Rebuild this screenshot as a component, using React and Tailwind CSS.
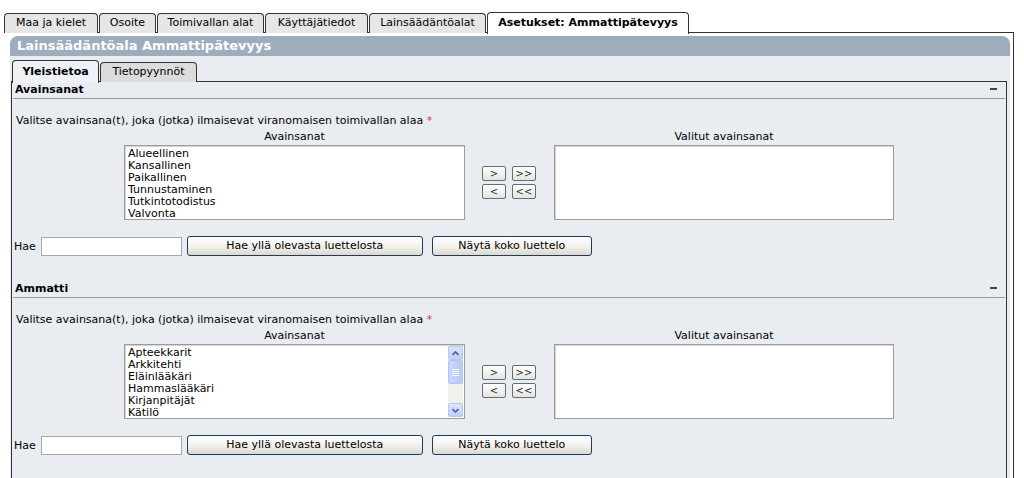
import React from "react";

const outerTabs = [
  { label: "Maa ja kielet", w: "w-[94px]" },
  { label: "Osoite", w: "w-[57px]" },
  { label: "Toimivallan alat", w: "w-[107px]" },
  { label: "Käyttäjätiedot", w: "w-[103px]" },
  { label: "Lainsäädäntöalat", w: "w-[117px]" },
];

function SmallBtn({ children }) {
  return (
    <div className="w-[24px] h-[15px] border border-[#5f6e78] rounded-[2px] bg-gradient-to-b from-[#ffffff] to-[#e4e4e0] flex items-center justify-center text-[10px] leading-none text-[#333]">
      {children}
    </div>
  );
}

function XpBtn({ children, w }) {
  return (
    <div
      className={`${w} h-[20px] border border-[#1d3b5a] rounded-[3px] bg-gradient-to-b from-[#ffffff] via-[#f3f2ee] to-[#dcd8cf] flex items-center justify-center text-[11px] text-black`}
    >
      {children}
    </div>
  );
}

function Chevron({ up }) {
  return (
    <svg width="7" height="5" viewBox="0 0 7 5">
      <path
        d={up ? "M0.5 4 L3.5 1 L6.5 4" : "M0.5 1 L3.5 4 L6.5 1"}
        fill="none"
        stroke="#4d6185"
        strokeWidth="1.6"
      />
    </svg>
  );
}

function Scrollbar() {
  return (
    <div className="w-[15px] h-full flex flex-col bg-[#f1f0ea]">
      <div className="h-[14px] border border-[#b7c9f3] rounded-[2px] bg-gradient-to-b from-[#dbe5fd] to-[#bccefa] flex items-center justify-center">
        <Chevron up />
      </div>
      <div className="h-[24px] border border-[#b2c4ef] rounded-[2px] bg-gradient-to-r from-[#c9d8fd] to-[#b9cbf8] flex flex-col items-center justify-center gap-[1px]">
        <div className="w-[7px] h-[1px] bg-[#eef3ff]" />
        <div className="w-[7px] h-[1px] bg-[#eef3ff]" />
        <div className="w-[7px] h-[1px] bg-[#eef3ff]" />
        <div className="w-[7px] h-[1px] bg-[#eef3ff]" />
      </div>
      <div className="flex-1" />
      <div className="h-[14px] border border-[#b7c9f3] rounded-[2px] bg-gradient-to-b from-[#dbe5fd] to-[#bccefa] flex items-center justify-center">
        <Chevron />
      </div>
    </div>
  );
}

function ListBox({ items, scroll, w }) {
  return (
    <div className={`${w} h-[75px] border border-[#9c9c9c] shadow-[inset_1px_1px_0_#d4d4d4] bg-white flex p-[1px]`}>
      <div className="flex-1 pl-[2px] pt-[1px] text-[11px] leading-[12px] text-black">
        {items.map((it) => (
          <div key={it}>{it}</div>
        ))}
      </div>
      {scroll && <Scrollbar />}
    </div>
  );
}

function Section({ title, items, scroll }) {
  return (
    <div>
      <div className="mx-[1px] h-[17px] flex items-center justify-between border-b border-[#9a9a9a] pl-[2px]">
        <span className="font-bold text-[11px] text-black">{title}</span>
        <span className="w-[7px] h-[2px] bg-[#444] mr-[8px] mt-[-2px]" />
      </div>
      <div className="pl-[4px] mt-[15px] leading-[14px] text-[11px] text-black">
        Valitse avainsana(t), joka (jotka) ilmaisevat viranomaisen toimivallan alaa{" "}
        <span className="text-[#d43a3a]">*</span>
      </div>
      <div className="flex ml-[112px] mt-[3px]">
        <div className="flex flex-col w-[341px]">
          <div className="text-center leading-[12px] text-[11px] text-black">Avainsanat</div>
          <div className="mt-[2px]">
            <ListBox items={items} scroll={scroll} w="w-[341px]" />
          </div>
        </div>
        <div className="ml-[17px] pt-[35px] flex flex-col gap-[3px]">
          <div className="flex gap-[6px]">
            <SmallBtn>&gt;</SmallBtn>
            <SmallBtn>&gt;&gt;</SmallBtn>
          </div>
          <div className="flex gap-[6px]">
            <SmallBtn>&lt;</SmallBtn>
            <SmallBtn>&lt;&lt;</SmallBtn>
          </div>
        </div>
        <div className="ml-[18px] flex flex-col w-[340px]">
          <div className="text-center leading-[12px] text-[11px] text-black">Valitut avainsanat</div>
          <div className="mt-[2px]">
            <ListBox items={[]} w="w-[340px]" />
          </div>
        </div>
      </div>
      <div className="flex items-center mt-[16px] pl-[2px] h-[20px]">
        <span className="text-[11px] text-black mt-[3px]">Hae</span>
        <div className="ml-[5px] w-[141px] h-[19px] border border-[#a7a7a7] bg-white mt-[1px]" />
        <div className="ml-[5px]">
          <XpBtn w="w-[236px]">Hae yllä olevasta luettelosta</XpBtn>
        </div>
        <div className="ml-[9px]">
          <XpBtn w="w-[160px]">Näytä koko luettelo</XpBtn>
        </div>
      </div>
    </div>
  );
}

export default function App() {
  return (
    <div className="w-[1024px] h-[478px] overflow-hidden bg-white font-['DejaVu_Sans',Verdana,sans-serif] text-[11px] text-black">
      <div className="pt-[11px] w-[1014px]">
        <div className="flex items-end gap-[1px] pl-[4px] h-[22px] relative z-10">
          {outerTabs.map((t) => (
            <div
              key={t.label}
              className={`${t.w} h-[20px] border border-b-0 border-[#333] rounded-t-[4px] bg-[#e6e6e6] flex items-center justify-center text-[11px] text-black`}
            >
              {t.label}
            </div>
          ))}
          <div className="w-[202px] h-[22px] -mb-px border border-b-0 border-[#333] rounded-t-[4px] bg-white flex items-center justify-center font-bold text-[11px] text-black">
            Asetukset: Ammattipätevyys
          </div>
        </div>
        <div className="ml-[4px] -mt-px border-t border-r border-[#333] pt-[3px] pl-[6px] pr-[3px] h-[460px]">
          <div className="w-[1000px] h-[20px] rounded-t-[8px] bg-[#9dadbe] flex items-center pl-[7px] text-white font-bold text-[13px]">
            Lainsäädäntöala Ammattipätevyys
          </div>
          <div className="w-[1000px] h-[440px] bg-[#e9edf2] pt-[4px]">
            <div className="flex items-end pl-[2px] h-[22px] relative z-10 gap-[1px]">
              <div className="w-[87px] h-[23px] -mb-px border border-b-0 border-[#333] rounded-t-[4px] bg-[#eef1f5] flex items-center justify-center font-bold text-[11px]">
                Yleistietoa
              </div>
              <div className="w-[97px] h-[20px] border border-b-0 border-[#333] rounded-t-[4px] bg-[#dcdcdc] flex items-center justify-center text-[11px]">
                Tietopyynnöt
              </div>
            </div>
            <div className="ml-[1px] w-[996px] h-[420px] -mt-px border border-b-0 border-[#333] bg-[#e9edf2]">
              <Section
                title="Avainsanat"
                items={[
                  "Alueellinen",
                  "Kansallinen",
                  "Paikallinen",
                  "Tunnustaminen",
                  "Tutkintotodistus",
                  "Valvonta",
                ]}
              />
              <div className="mt-[25px]">
                <Section
                  title="Ammatti"
                  scroll
                  items={[
                    "Apteekkarit",
                    "Arkkitehti",
                    "Eläinlääkäri",
                    "Hammaslääkäri",
                    "Kirjanpitäjät",
                    "Kätilö",
                  ]}
                />
              </div>
            </div>
          </div>
        </div>
      </div>
    </div>
  );
}
